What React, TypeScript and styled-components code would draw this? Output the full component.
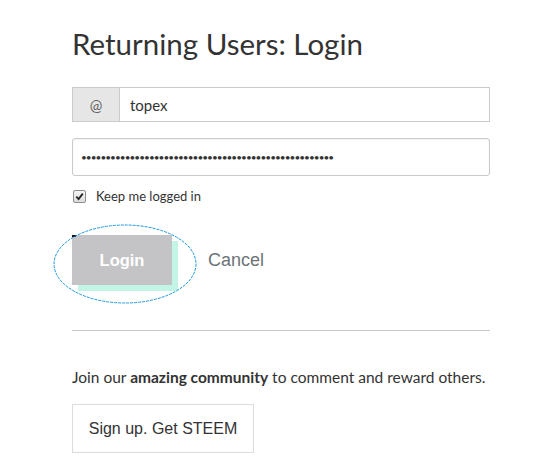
import React from "react";
import styled, { createGlobalStyle } from "styled-components";

const GlobalStyle = createGlobalStyle`
  body {
    margin: 0;
    background: #fff;
    font-family: Lato, "Noto Sans", sans-serif;
    color: #333;
  }
`;

const Page = styled.div`
  width: 552px;
  height: 470px;
  overflow: hidden;
`;

const Column = styled.div`
  width: 418px;
  margin-left: 72px;
  padding-top: 26px;
`;

const Title = styled.h3`
  margin: 0 0 25px;
  font-size: 29.5px;
  font-weight: 400;
  line-height: 36px;
  color: #333;
`;

const InputGroup = styled.div`
  display: flex;
  height: 35px;
  border: 1px solid #cacaca;
  box-sizing: border-box;
  margin-bottom: 16px;
`;

const Addon = styled.span`
  width: 46px;
  flex: none;
  display: flex;
  align-items: center;
  justify-content: center;
  background: #e6e6e6;
  border-right: 1px solid #cacaca;
  color: #666;
  font-size: 15px;
`;

const TextInput = styled.input`
  flex: 1;
  min-width: 0;
  border: none;
  outline: none;
  padding: 0 10px;
  font-family: inherit;
  font-size: 15px;
  color: #333;
  background: #fff;
`;

const PasswordInput = styled.input`
  display: block;
  width: 100%;
  height: 38px;
  box-sizing: border-box;
  border: 1px solid #cacaca;
  border-radius: 3px;
  box-shadow: inset 0 1px 2px rgba(0, 0, 0, 0.06);
  padding: 0 8px;
  font-family: inherit;
  font-size: 10px;
  letter-spacing: -0.95px;
  color: #333;
  outline: none;
  margin-bottom: 13px;
`;

const CheckRow = styled.label`
  display: flex;
  align-items: center;
  gap: 10px;
  font-size: 13px;
  color: #333;
  margin-left: 1px;
  height: 14px;
`;

const CheckBox = styled.span`
  width: 11px;
  height: 11px;
  border: 1px solid #8f8f8f;
  border-radius: 2px;
  background: linear-gradient(#f4f4f4, #dcdcdc);
  display: flex;
  align-items: center;
  justify-content: center;
`;

const Actions = styled.div`
  position: relative;
  display: flex;
  align-items: center;
  gap: 36px;
  margin-top: 32px;
  height: 56px;
`;

const LoginButton = styled.button`
  position: relative;
  width: 100px;
  height: 50px;
  border: none;
  background: #c4c4c6;
  color: #fff;
  font-family: "Liberation Sans", Arial, sans-serif;
  font-size: 16.5px;
  font-weight: 700;
  box-shadow: 6px 6px 0 0 #c2f5e6;
  margin-bottom: 6px;
  cursor: pointer;

  &::before {
    content: "";
    position: absolute;
    left: 0;
    top: 0;
    width: 4px;
    height: 2px;
    background: #111;
  }
`;

const CancelLink = styled.a`
  font-family: "Liberation Sans", Arial, sans-serif;
  font-size: 18px;
  color: #6c7378;
  text-decoration: none;
  margin-bottom: 6px;
`;

const Ring = styled.svg`
  position: absolute;
  left: -19px;
  top: -11px;
  pointer-events: none;
`;

const Divider = styled.hr`
  border: none;
  border-top: 1px solid #cacaca;
  margin: 39px 0 0;
`;

const JoinText = styled.p`
  margin: 36px 0 17px;
  font-size: 15.5px;
  line-height: 20px;
  color: #333;
`;

const SignUpButton = styled.button`
  width: 182px;
  height: 49px;
  background: #fff;
  border: 1px solid #dcdcdc;
  font-family: "Liberation Sans", Arial, sans-serif;
  font-size: 16px;
  color: #333;
  cursor: pointer;
`;

export default function App() {
  return (
    <Page>
      <GlobalStyle />
      <Column>
        <Title>Returning Users: Login</Title>
        <InputGroup>
          <Addon>@</Addon>
          <TextInput defaultValue="topex" />
        </InputGroup>
        <PasswordInput type="password" defaultValue={"x".repeat(52)} />
        <CheckRow>
          <CheckBox>
            <svg width="9" height="9" viewBox="0 0 10 10">
              <path d="M1.5 5.2 L4 7.8 L8.6 1.8" fill="none" stroke="#222" strokeWidth="2" />
            </svg>
          </CheckBox>
          Keep me logged in
        </CheckRow>
        <Actions>
          <LoginButton>Login</LoginButton>
          <CancelLink href="#">Cancel</CancelLink>
          <Ring width="144" height="80" viewBox="0 0 144 80">
            <ellipse cx="72" cy="40" rx="71" ry="39" fill="none" stroke="#1a98e4" strokeWidth="1" strokeDasharray="3 1" />
          </Ring>
        </Actions>
        <Divider />
        <JoinText>
          Join our <b>amazing community</b> to comment and reward others.
        </JoinText>
        <SignUpButton>Sign up. Get STEEM</SignUpButton>
      </Column>
    </Page>
  );
}
